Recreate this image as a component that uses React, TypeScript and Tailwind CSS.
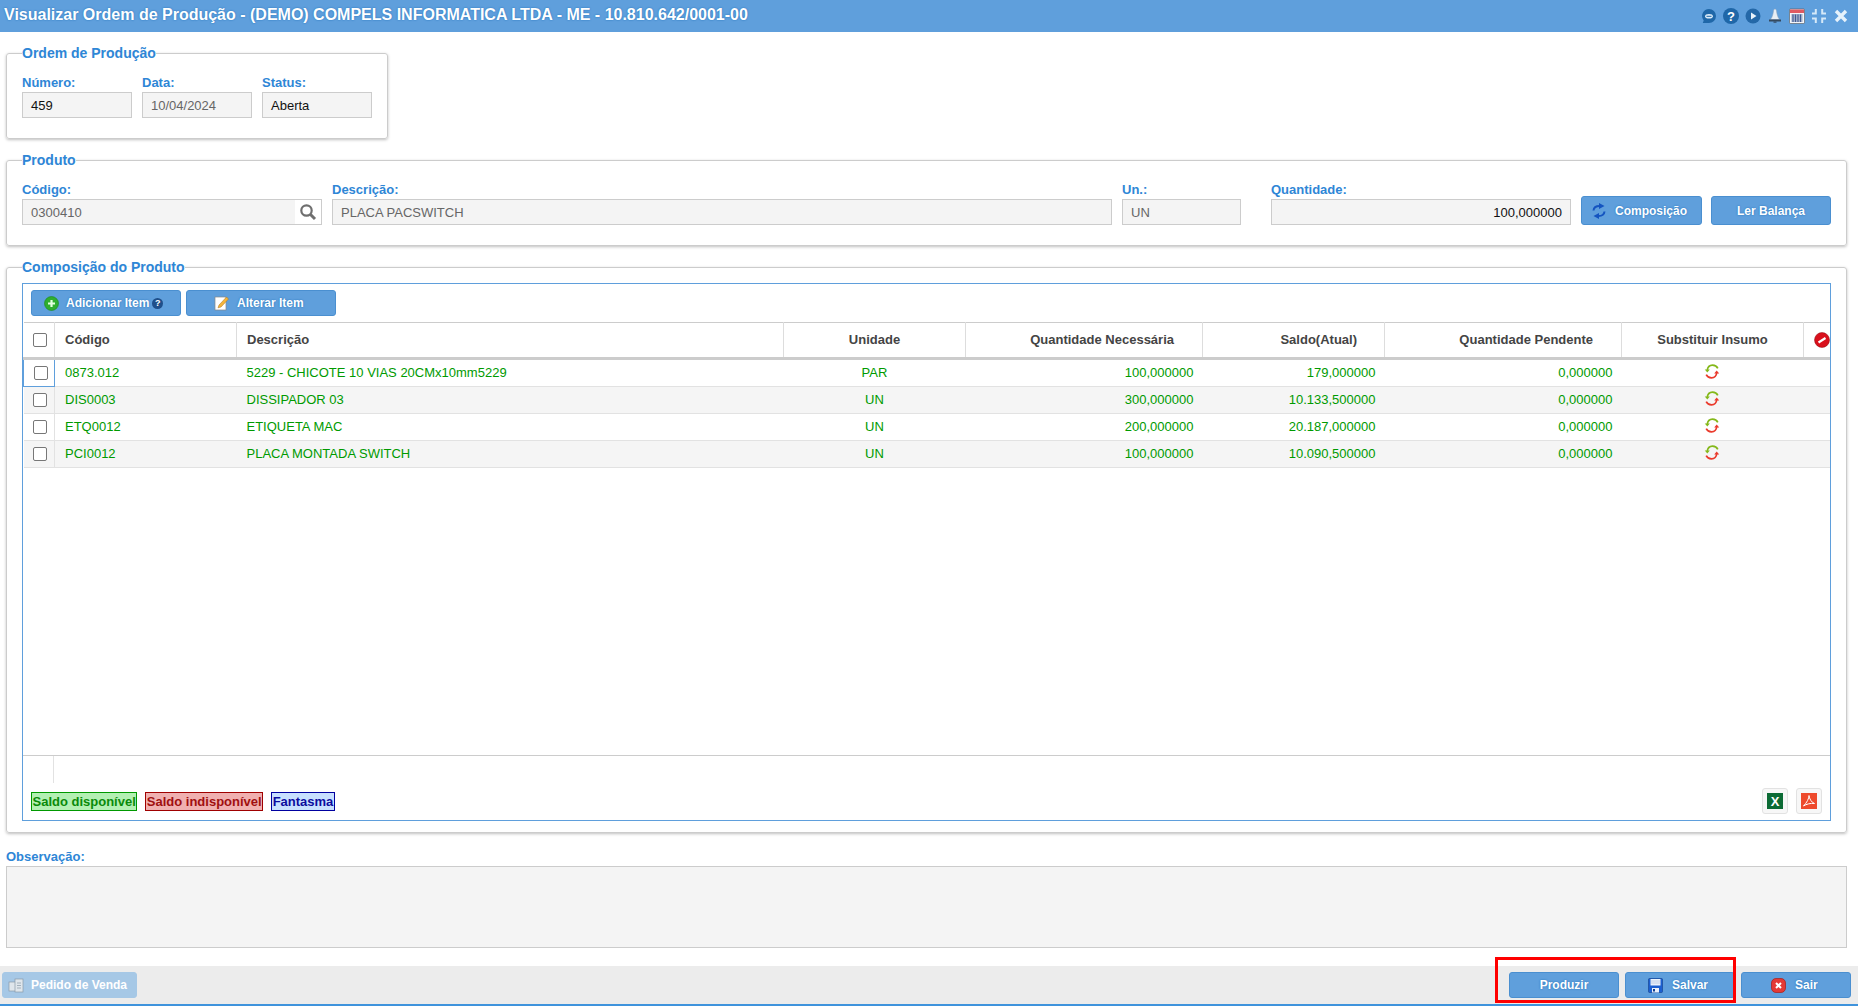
const labelCls = "block text-[13px] leading-[14px] font-bold text-[#2e86d6]"
const inputCls = "h-[26px] border border-[#ccc] bg-[#f4f4f4] px-[8px] text-[13px] leading-[25px]"
const legendCls = "text-[14px] leading-[16px] font-bold text-[#2e86d6]"
const fieldsetCls = "rounded-[3px] border border-[#ccc] shadow-[0_1px_3px_rgba(0,0,0,0.25)]"
const btnCls =
  "flex h-[26px] items-center justify-center rounded-[3px] border border-[#4a8fd0] bg-[#5f9fdc] text-[12px] font-bold text-white [text-shadow:0_0_2px_#1d6fb8]"

const rows = [
  { code: "0873.012", desc: "5229 - CHICOTE 10 VIAS 20CMx10mm5229", un: "PAR", need: "100,000000", bal: "179,000000" },
  { code: "DIS0003", desc: "DISSIPADOR 03", un: "UN", need: "300,000000", bal: "10.133,500000" },
  { code: "ETQ0012", desc: "ETIQUETA MAC", un: "UN", need: "200,000000", bal: "20.187,000000" },
  { code: "PCI0012", desc: "PLACA MONTADA SWITCH", un: "UN", need: "100,000000", bal: "10.090,500000" },
]

function Field({ label, value, className, dark }: { label: string; value: string; className: string; dark?: boolean }) {
  return (
    <div className={className}>
      <label className={labelCls}>{label}</label>
      <div className={`${inputCls} mt-[2px] ${dark ? "text-[#111]" : "text-[#666]"}`}>{value}</div>
    </div>
  )
}

function Check() {
  return <span className="block h-[14px] w-[14px] rounded-[2px] border border-[#777] bg-white" />
}

function SwapIcon() {
  return (
    <svg width="16" height="15" viewBox="0 0 16 15" fill="none" className="mx-auto -translate-x-[1px] -translate-y-[2px]">
      <path d="M3.200 6.500C3.600 3.200 5.800 1.200 8.500 1.200c2.300 0 4.300 1.100 5.300 3.200" stroke="#84b81a" strokeWidth="1.700" />
      <path d="M.800 5.600l2.500 3 2.500-3z" fill="#84b81a" />
      <path d="M12.800 8.500c-.4 3.300-2.600 5.300-5.300 5.300-2.300 0-4.300-1.100-5.300-3.200" stroke="#ea3a2c" strokeWidth="1.700" />
      <path d="M15.200 9.400l-2.500-3-2.500 3z" fill="#ea3a2c" />
    </svg>
  )
}

function TitleIcons() {
  return (
    <div className="flex items-center gap-[6px]">
      <svg width="16" height="16" viewBox="0 0 16 16">
        <path d="M8 1a7 7 0 0 1 0 14H1.800l.9-2.600A7 7 0 0 1 8 1z" fill="#1f67a8" />
        <ellipse cx="8" cy="8.300" rx="3.900" ry="2.300" fill="#dcecf8" />
        <rect x="5.500" y="7.800" width="5" height="1" fill="#1f67a8" />
      </svg>
      <span className="flex h-[16px] w-[16px] items-center justify-center rounded-full bg-[#1f67a8] text-[13px] leading-none font-bold text-white">?</span>
      <svg width="16" height="16" viewBox="0 0 16 16">
        <circle cx="8" cy="8" r="7.500" fill="#2468a8" />
        <path d="M6 4.500v7l5.500-3.500z" fill="#e8f2fa" />
      </svg>
      <svg width="16" height="16" viewBox="0 0 16 16">
        <path d="M8 1c1 0 1.300.8 1.500 2 .3 2.500 1 6 3 8.500h-9c2-2.500 2.700-6 3-8.500C6.700 1.800 7 1 8 1z" fill="#e8eef4" stroke="#88a0b8" strokeWidth=".5" />
        <rect x="2" y="11.500" width="12" height="2" fill="#34495e" />
        <rect x="6.500" y="13.500" width="3" height="1.200" fill="#34495e" />
      </svg>
      <svg width="16" height="16" viewBox="0 0 16 16">
        <rect x="0.500" y="1" width="15" height="14.500" rx="1" fill="#f4f6fa" stroke="#555" strokeWidth=".6" />
        <rect x="1" y="1.500" width="14" height="3.500" fill="#e05a62" />
        <path d="M2.500 7h11M2.500 9h11M2.500 11h11M2.500 13h11M4 6.500v7.500M6.500 6.500v7.500M9 6.500v7.500M11.500 6.500v7.500" stroke="#34508c" strokeWidth=".9" />
      </svg>
      <svg width="16" height="16" viewBox="0 0 16 16" fill="#d6e9f8">
        <path d="M1 4.500h2.800V1h2v5.500H1zM15 4.500h-2.800V1h-2v5.500H15zM1 11.500h2.800V15h2V9.500H1zM15 11.500h-2.800V15h-2V9.500H15z" />
      </svg>
      <svg width="16" height="16" viewBox="0 0 16 16" fill="none" stroke="#e6f2fb" strokeWidth="3.400">
        <path d="M3 3l10 10M13 3L3 13" />
      </svg>
    </div>
  )
}

export default function App() {
  return (
    <div className="relative flex h-[1006px] w-[1858px] flex-col overflow-hidden bg-white font-['Liberation_Sans',Arial,sans-serif]">
      <header className="flex h-[32px] shrink-0 items-center justify-between bg-[#5f9fdc] pr-[9px] pl-[4px]">
        <h1 className="pb-[2px] text-[16px] font-bold text-white [text-shadow:0_0_2px_#1d6fb8]">
          Visualizar Ordem de Produção - (DEMO) COMPELS INFORMATICA LTDA - ME - 10.810.642/0001-00
        </h1>
        <TitleIcons />
      </header>

      <main className="flex min-h-0 flex-1 flex-col pt-[13px] pr-[11px] pl-[6px]">
        <fieldset className={`${fieldsetCls} h-[94px] w-[381px] px-[15px]`}>
          <legend className={legendCls}>Ordem de Produção</legend>
          <div className="mt-[15px] flex gap-[10px]">
            <Field label="Número:" value="459" className="w-[110px]" dark />
            <Field label="Data:" value="10/04/2024" className="w-[110px]" />
            <Field label="Status:" value="Aberta" className="w-[110px]" dark />
          </div>
        </fieldset>

        <fieldset className={`${fieldsetCls} mt-[13px] h-[94px] px-[15px]`}>
          <legend className={legendCls}>Produto</legend>
          <div className="mt-[15px] flex items-end">
            <div className="w-[300px]">
              <label className={labelCls}>Código:</label>
              <div className="mt-[2px] flex h-[26px] border border-[#ccc] bg-white">
                <div className="flex-1 bg-[#f4f4f4] pl-[8px] text-[13px] leading-[25px] text-[#666]">0300410</div>
                <div className="flex w-[26px] items-center justify-center">
                  <svg width="18" height="18" viewBox="0 0 18 18" fill="none" stroke="#6f6f6f">
                    <circle cx="7.500" cy="7.500" r="5.200" strokeWidth="2.200" />
                    <path d="M11.500 11.500L16 16" strokeWidth="3" />
                  </svg>
                </div>
              </div>
            </div>
            <Field label="Descrição:" value="PLACA PACSWITCH" className="ml-[10px] w-[780px]" />
            <Field label="Un.:" value="UN" className="ml-[10px] w-[119px]" />
            <div className="ml-[30px] w-[300px]">
              <label className={labelCls}>Quantidade:</label>
              <div className={`${inputCls} mt-[2px] text-right text-[#111]`}>100,000000</div>
            </div>
            <button className={`${btnCls} ml-[10px] h-[29px] w-[121px] justify-start gap-[8px] pl-[9px]`}>
              <svg width="16" height="16" viewBox="0 0 16 16" fill="none" stroke="#1454c0" strokeWidth="2">
                <path d="M2.500 7.500c.3-2.800 2.500-4.500 6-4.500" />
                <path d="M8 0l5.500 3L8 6z" fill="#1454c0" stroke="none" />
                <path d="M13.500 8.500c-.3 2.800-2.500 4.500-6 4.500" />
                <path d="M8 16l-5.500-3L8 10z" fill="#1454c0" stroke="none" />
              </svg>
              Composição
            </button>
            <button className={`${btnCls} ml-[9px] h-[29px] w-[120px]`}>Ler Balança</button>
          </div>
        </fieldset>

        <fieldset className={`${fieldsetCls} mt-[13px] px-[15px] pb-[11px]`}>
          <legend className={legendCls}>Composição do Produto</legend>
          <div className="mt-[8px] flex h-[538px] flex-col border border-[#5f9fdc]">
            <div className="flex h-[38px] shrink-0 gap-[5px] pt-[6px] pl-[8px]">
              <button className={`${btnCls} w-[150px] justify-start gap-[7px] pl-[12px]`}>
                <svg width="15" height="15" viewBox="0 0 15 15">
                  <circle cx="7.500" cy="7.500" r="7" fill="#2fae2f" stroke="#1a8a1a" strokeWidth=".6" />
                  <path d="M7.500 4v7M4 7.500h7" stroke="#e4ffe0" strokeWidth="2.200" />
                </svg>
                <span className="flex items-center gap-[3px]">
                  Adicionar Item
                  <span className="flex h-[11px] w-[11px] items-center justify-center rounded-full bg-[#1f4f8a] text-[9px] leading-none text-white [text-shadow:none]">?</span>
                </span>
              </button>
              <button className={`${btnCls} w-[150px] justify-start gap-[8px] pl-[27px]`}>
                <svg width="15" height="16" viewBox="0 0 15 16">
                  <rect x="1" y="2" width="11" height="13" fill="#fff" stroke="#888" strokeWidth=".7" />
                  <path d="M5 10l7.500-8 2 2L7 12l-3 .8z" fill="#f5b53b" stroke="#a9701a" strokeWidth=".5" />
                </svg>
                Alterar Item
              </button>
            </div>

            <table className="w-full table-fixed border-collapse text-[13px]">
              <colgroup>
                <col className="w-[31px]" />
                <col className="w-[182px]" />
                <col className="w-[547px]" />
                <col className="w-[182px]" />
                <col className="w-[237px]" />
                <col className="w-[182px]" />
                <col className="w-[237px]" />
                <col className="w-[182px]" />
                <col />
              </colgroup>
              <thead>
                <tr className="h-[36px] border-t border-b-[3px] border-t-[#ccc] border-b-[#ccc] font-bold text-[#444]">
                  <th className="border-r border-[#ddd] pl-[3px]"><span className="flex justify-center"><Check /></span></th>
                  <th className="border-r border-[#ddd] pl-[10px] text-left">Código</th>
                  <th className="border-r border-[#ddd] pl-[10px] text-left">Descrição</th>
                  <th className="border-r border-[#ddd] text-center">Unidade</th>
                  <th className="border-r border-[#ddd] pr-[28px] text-right">Quantidade Necessária</th>
                  <th className="border-r border-[#ddd] pr-[27px] text-right">Saldo(Atual)</th>
                  <th className="border-r border-[#ddd] pr-[28px] text-right">Quantidade Pendente</th>
                  <th className="border-r border-[#ddd] text-center">Substituir Insumo</th>
                  <th>
                    <svg width="16" height="16" viewBox="0 0 16 16" className="ml-[10px]">
                      <circle cx="8" cy="8" r="7.500" fill="#d9101c" stroke="#8d0d12" strokeWidth=".5" />
                      <path d="M4.500 10.500l7-4.500" stroke="#fff" strokeWidth="2.200" />
                    </svg>
                  </th>
                </tr>
              </thead>
              <tbody className="text-[#009a00]">
                {rows.map((r, i) => (
                  <tr key={r.code} className={`border-b border-[#e2e2e2] ${i === 0 ? "h-[28px]" : "h-[27px]"} ${i % 2 ? "bg-[#f5f5f5]" : "bg-white"}`}>
                    <td className={`border-r pl-[3px] ${i === 0 ? "border border-[#5f9fdc]" : "border-[#e2e2e2]"}`}>
                      <span className="flex justify-center"><Check /></span>
                    </td>
                    <td className="pl-[10px]">{r.code}</td>
                    <td className="pl-[10px]">{r.desc}</td>
                    <td className="text-center">{r.un}</td>
                    <td className="pr-[9px] text-right">{r.need}</td>
                    <td className="pr-[9px] text-right">{r.bal}</td>
                    <td className="pr-[9px] text-right">0,000000</td>
                    <td><SwapIcon /></td>
                    <td />
                  </tr>
                ))}
              </tbody>
            </table>

            <div className="flex-1" />
            <div className="h-[65px] shrink-0 border-t border-[#ccc]">
              <div className="h-[27px] w-[31px] border-r border-[#e2e2e2]" />
              <div className="flex items-start justify-between pr-[8px] pl-[8px]">
                <div className="mt-[9px] flex gap-[8px] text-[13px] leading-[17px] font-bold">
                  <span className="border border-[#009900] bg-[#b3f0b3] px-[0.5px] text-[#0a8a0a]">Saldo disponível</span>
                  <span className="border border-[#a00000] bg-[#f0b0b0] px-[0.5px] text-[#a00f0f]">Saldo indisponível</span>
                  <span className="border border-[#0000a0] bg-[#c8e0ff] px-[0.5px] text-[#0c0c9e]">Fantasma</span>
                </div>
                <div className="mt-[5px] flex gap-[8px]">
                  <span className="flex h-[26px] w-[26px] items-center justify-center rounded-[3px] border border-[#e2e2e2] bg-[#f7f7f7]">
                    <span className="flex h-[16px] w-[16px] items-center justify-center bg-[#0c6b35] text-[13px] leading-none font-bold text-white">X</span>
                  </span>
                  <span className="flex h-[26px] w-[26px] items-center justify-center rounded-[3px] border border-[#e2e2e2] bg-[#f7f7f7]">
                    <svg width="16" height="16" viewBox="0 0 16 16">
                      <rect width="16" height="16" fill="#ee4a2c" />
                      <path d="M8 2.500c0 3-2 7-5.500 10.500 3-2 7-3 11-2.500-3-1-5.300-5-5.500-8z" fill="none" stroke="#fff" strokeWidth="1" />
                    </svg>
                  </span>
                </div>
              </div>
            </div>
          </div>
        </fieldset>

        <label className={`${labelCls} mt-[17px]`}>Observação:</label>
        <div className="mt-[2px] h-[82px] border border-[#ccc] bg-[#f4f4f4]" />
      </main>

      <footer className="flex h-[40px] shrink-0 items-start justify-between border-b-2 border-[#3f93dc] bg-[#ececec] pt-[6px] pr-[7px] pl-[2px]">
        <button className={`${btnCls} w-[135px] justify-start gap-[7px] border-[#a6c8e6] bg-[#a6c8e6] pl-[5px] text-[#e6f0f8] [text-shadow:none]`}>
          <svg width="16" height="16" viewBox="0 0 16 16" fill="#dfe6ec" stroke="#8a9aa8" strokeWidth=".7">
            <rect x="1" y="5" width="7" height="9" />
            <rect x="7" y="2" width="8" height="13" />
            <path d="M9 6h4M9 8.500h4M9 11h4" />
          </svg>
          Pedido de Venda
        </button>
        <div className="flex gap-[6px]">
          <button className={`${btnCls} w-[110px]`}>Produzir</button>
          <button className={`${btnCls} w-[110px] justify-start gap-[9px] pl-[22px]`}>
            <svg width="15" height="15" viewBox="0 0 15 15">
              <rect x="0.500" y="0.500" width="14" height="14" rx="1" fill="#1b5fd0" stroke="#123e8c" strokeWidth=".6" />
              <rect x="2.500" y="1" width="10" height="6.500" fill="#eaf1fb" />
              <path d="M3 3h9M3 5h9" stroke="#b5c6e0" strokeWidth=".8" />
              <rect x="4" y="10" width="7" height="4.500" fill="#eaf1fb" />
              <rect x="5" y="11" width="2" height="2.500" fill="#123e8c" />
            </svg>
            Salvar
          </button>
          <button className={`${btnCls} w-[110px] justify-start gap-[9px] pl-[29px]`}>
            <svg width="15" height="15" viewBox="0 0 15 15">
              <rect x="0.500" y="0.500" width="14" height="14" rx="4.500" fill="#e43a36" stroke="#a81c18" strokeWidth=".7" />
              <path d="M5 5l5 5M10 5l-5 5" stroke="#fff" strokeWidth="2" />
            </svg>
            Sair
          </button>
        </div>
      </footer>

      <div className="pointer-events-none absolute top-[957px] left-[1495px] h-[46px] w-[241px] border-[3px] border-[#ff0000]" />
    </div>
  )
}
